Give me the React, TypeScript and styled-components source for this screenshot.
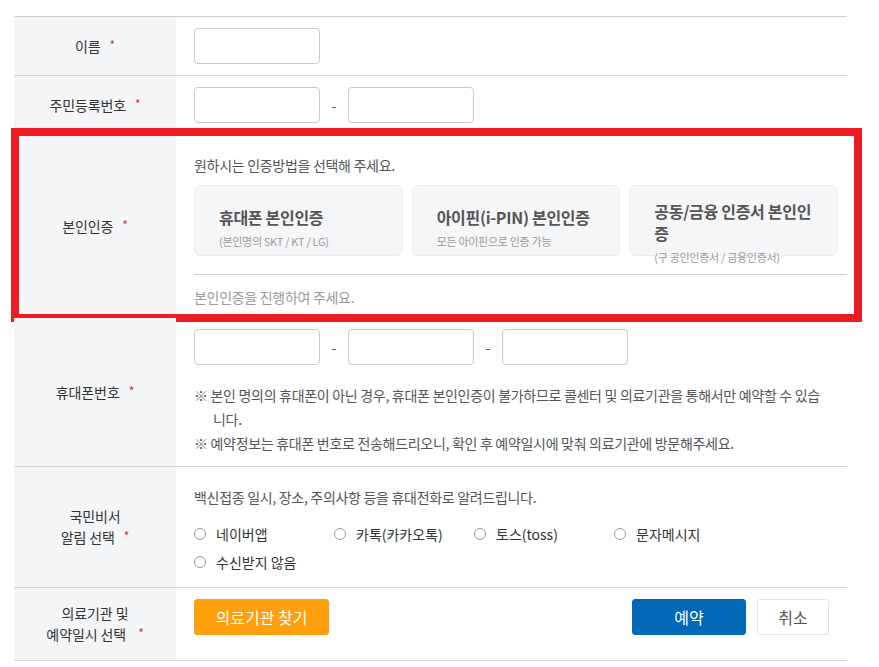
import React from 'react'
import styled, { createGlobalStyle } from 'styled-components'

const GlobalStyle = createGlobalStyle`
  body {
    margin: 0;
    background: #fff;
    font-family: "Noto Sans CJK KR", "Noto Sans", sans-serif;
    color: #333;
  }
`

const Page = styled.main`
  padding: 16px 32px 0 14px;
  width: 833px;
`

const FormTable = styled.div`
  border-top: 1px solid #cfcfcf;
`

const Row = styled.div`
  position: relative;
  display: grid;
  grid-template-columns: 162px 1fr;
  border-bottom: 1px solid #d6d6d6;
`

const Label = styled.div`
  background: #f4f5f7;
  display: flex;
  align-items: center;
  justify-content: center;
  text-align: center;
  padding: 15px 10px;
  font-size: 14px;
  line-height: 21px;
  color: #333;
  letter-spacing: -0.1px;
`

const Req = styled.span`
  color: #e5302c;
  font-size: 12px;
  margin-left: 9px;
  position: relative;
  top: -2px;
`

const Cell = styled.div<{ $pad?: string }>`
  padding: ${p => p.$pad || '11px 18px'};
  min-width: 0;
`

const Inputs = styled.div`
  display: flex;
  align-items: center;
`

const Input = styled.input`
  width: 126px;
  height: 36px;
  box-sizing: border-box;
  border: 1px solid #c9c9c9;
  border-radius: 4px;
  background: #fff;
  outline: none;
`

const Dash = styled.span`
  width: 28px;
  text-align: center;
  font-size: 14px;
  color: #555;
`

const Guide = styled.p<{ $muted?: boolean }>`
  margin: 0;
  font-size: 14px;
  line-height: 22px;
  letter-spacing: -0.3px;
  color: ${p => (p.$muted ? '#9a9a9a' : '#555')};
`

const Cards = styled.div`
  display: grid;
  grid-template-columns: repeat(3, 1fr);
  gap: 9px;
  padding-right: 9px;
  margin-top: 9px;
`

const Card = styled.button`
  height: 71px;
  box-sizing: border-box;
  border: 1px solid #eceef1;
  border-radius: 6px;
  background: #f5f6f8;
  padding: 14px 24px 0;
  text-align: left;
  font-family: inherit;
  cursor: pointer;
  display: block;
`

const CardTitle = styled.div`
  font-size: 16px;
  line-height: 22px;
  font-weight: 700;
  color: #555;
  letter-spacing: -0.3px;
`

const CardSub = styled.div`
  margin-top: 5px;
  font-size: 11px;
  line-height: 16px;
  color: #9a9a9a;
  letter-spacing: -0.3px;
`

const Result = styled.div`
  margin-top: 18px;
  border-top: 1px solid #cfcfcf;
  padding-top: 11px;
`

const Highlight = styled.div`
  position: absolute;
  left: -3px;
  right: -15px;
  top: -7px;
  bottom: -5px;
  border: 8px solid #ed1c24;
  pointer-events: none;
`

const Notes = styled.ul`
  list-style: none;
  margin: 18px 0 0;
  padding: 0;
`

const Note = styled.li`
  font-size: 14px;
  line-height: 24px;
  color: #555;
  letter-spacing: -0.3px;
  padding-left: 19px;
  text-indent: -19px;
`

const Radios = styled.div`
  display: flex;
  flex-wrap: wrap;
  width: 560px;
  row-gap: 4px;
  margin-top: 14px;
`

const RadioItem = styled.label`
  width: 140px;
  display: flex;
  align-items: center;
  gap: 10px;
  font-size: 14px;
  line-height: 24px;
  color: #333;
`

const Circle = styled.span`
  width: 12px;
  height: 12px;
  box-sizing: border-box;
  border: 1px solid #999;
  border-radius: 50%;
  background: #fff;
  flex: none;
`

const Actions = styled.div`
  display: flex;
  align-items: center;
`

const Btn = styled.button<{ $tone: 'orange' | 'blue' | 'plain' }>`
  height: 36px;
  border-radius: 3px;
  font-family: inherit;
  font-size: 16px;
  cursor: pointer;
  border: 1px solid
    ${p => (p.$tone === 'orange' ? '#ff9f0c' : p.$tone === 'blue' ? '#0068b7' : '#e3e3e3')};
  background: ${p => (p.$tone === 'orange' ? '#ff9f0c' : p.$tone === 'blue' ? '#0068b7' : '#fff')};
  color: ${p => (p.$tone === 'plain' ? '#555' : '#fff')};
`

const FindBtn = styled(Btn)`
  width: 135px;
`

const SubmitBtn = styled(Btn)`
  width: 114px;
  margin-left: auto;
`

const CancelBtn = styled(Btn)`
  width: 72px;
  margin-left: 11px;
`

const methods = [
  { title: '휴대폰 본인인증', sub: '(본인명의 SKT / KT / LG)' },
  { title: '아이핀(i-PIN) 본인인증', sub: '모든 아이핀으로 인증 가능' },
  { title: '공동/금융 인증서 본인인증', sub: '(구 공인인증서 / 금융인증서)' }
]

const channels = ['네이버앱', '카톡(카카오톡)', '토스(toss)', '문자메시지', '수신받지 않음']

export default function App () {
  return (
    <Page>
      <GlobalStyle />
      <FormTable>
        <Row>
          <Label>
            <span>이름<Req>*</Req></span>
          </Label>
          <Cell>
            <Input />
          </Cell>
        </Row>

        <Row>
          <Label>
            <span>주민등록번호<Req>*</Req></span>
          </Label>
          <Cell>
            <Inputs>
              <Input />
              <Dash>-</Dash>
              <Input />
            </Inputs>
          </Cell>
        </Row>

        <Row>
          <Label>
            <span>본인인증<Req>*</Req></span>
          </Label>
          <Cell $pad='19px 0 9px 18px'>
            <Guide>원하시는 인증방법을 선택해 주세요.</Guide>
            <Cards>
              {methods.map(m => (
                <Card key={m.title} type='button'>
                  <CardTitle>{m.title}</CardTitle>
                  <CardSub>{m.sub}</CardSub>
                </Card>
              ))}
            </Cards>
            <Result>
              <Guide $muted>본인인증을 진행하여 주세요.</Guide>
            </Result>
          </Cell>
          <Highlight />
        </Row>

        <Row>
          <Label>
            <span>휴대폰번호<Req>*</Req></span>
          </Label>
          <Cell $pad='11px 18px 11px'>
            <Inputs>
              <Input />
              <Dash>-</Dash>
              <Input />
              <Dash>-</Dash>
              <Input />
            </Inputs>
            <Notes>
              <Note>※ 본인 명의의 휴대폰이 아닌 경우, 휴대폰 본인인증이 불가하므로 콜센터 및 의료기관을 통해서만 예약할 수 있습니다.</Note>
              <Note>※ 예약정보는 휴대폰 번호로 전송해드리오니, 확인 후 예약일시에 맞춰 의료기관에 방문해주세요.</Note>
            </Notes>
          </Cell>
        </Row>

        <Row>
          <Label>
            <span>국민비서<br />알림 선택<Req>*</Req></span>
          </Label>
          <Cell $pad='19px 18px 13px'>
            <Guide>백신접종 일시, 장소, 주의사항 등을 휴대전화로 알려드립니다.</Guide>
            <Radios>
              {channels.map(c => (
                <RadioItem key={c}>
                  <Circle />
                  {c}
                </RadioItem>
              ))}
            </Radios>
          </Cell>
        </Row>

        <Row>
          <Label>
            <span>의료기관 및<br />예약일시 선택 <Req>*</Req></span>
          </Label>
          <Cell>
            <Actions>
              <FindBtn $tone='orange' type='button'>의료기관 찾기</FindBtn>
              <SubmitBtn $tone='blue' type='button'>예약</SubmitBtn>
              <CancelBtn $tone='plain' type='button'>취소</CancelBtn>
            </Actions>
          </Cell>
        </Row>
      </FormTable>
    </Page>
  )
}
